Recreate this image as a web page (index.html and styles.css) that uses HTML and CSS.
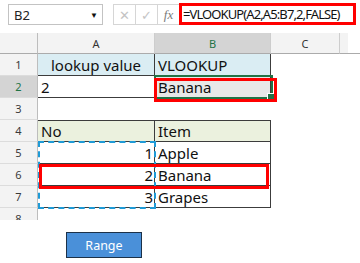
FILE: index.html
```html
<!DOCTYPE html>
<html lang="en">
<head>
    <meta charset="UTF-8" />
    <title>VLOOKUP</title>
    <link rel="stylesheet" href="styles.css">
</head>
<body>
    <div class="toolbar">
        <div class="name-box">
            <span>B2</span>
            <span class="drop">&#9660;</span>
        </div>
        <div class="fx-buttons">
            <span class="fx-btn">&#10005;</span>
            <span class="fx-btn">&#10003;</span>
            <span class="fx-btn fx">fx</span>
        </div>
        <div class="formula">=VLOOKUP(A2,A5:B7,2,FALSE)</div>
    </div>

    <div class="sheet">
        <div class="grid">
            <div class="hd corner"></div>
            <div class="hd col">A</div>
            <div class="hd col sel">B</div>
            <div class="hd col">C</div>
            <div class="hd rest"></div>

            <div class="rh">1</div>
            <div class="cell blue center">lookup value</div>
            <div class="cell blue">VLOOKUP</div>
            <div class="blank"></div><div class="blank"></div>

            <div class="rh sel">2</div>
            <div class="cell">2</div>
            <div class="cell active">Banana</div>
            <div class="blank"></div><div class="blank"></div>

            <div class="rh">3</div>
            <div class="blank"></div><div class="blank"></div><div class="blank"></div><div class="blank"></div>

            <div class="rh">4</div>
            <div class="cell green top">No</div>
            <div class="cell green top">Item</div>
            <div class="blank"></div><div class="blank"></div>

            <div class="rh">5</div>
            <div class="cell right">1</div>
            <div class="cell">Apple</div>
            <div class="blank"></div><div class="blank"></div>

            <div class="rh">6</div>
            <div class="cell right">2</div>
            <div class="cell">Banana</div>
            <div class="blank"></div><div class="blank"></div>

            <div class="rh">7</div>
            <div class="cell right">3</div>
            <div class="cell">Grapes</div>
            <div class="blank"></div><div class="blank"></div>

            <div class="rh">8</div>
            <div class="blank"></div><div class="blank"></div><div class="blank"></div><div class="blank"></div>
        </div>

        <!-- overlays -->
        <div class="selection"><span class="handle"></span></div>
        <div class="marquee"></div>
        <div class="mark mark-b2"></div>
        <div class="mark mark-row6"></div>
    </div>

    <div class="actions">
        <button class="range-btn">Range</button>
    </div>
</body>
</html>
```

FILE: styles.css
```css
body {
    margin: 0;
    background: #fff;
    font-family: "Noto Sans", "Liberation Sans", sans-serif;
    color: #222;
    width: 360px;
    height: 263px;
    overflow: hidden;
}

/* formula bar */
.toolbar {
    display: flex;
    align-items: flex-start;
    padding: 3px 0 0 8px;
    height: 30px;
    box-sizing: border-box;
}
.name-box {
    width: 95px;
    height: 21px;
    margin-top: 1px;
    box-sizing: border-box;
    border: 1px solid #c3c3c3;
    display: flex;
    align-items: center;
    justify-content: space-between;
    padding: 0 4px 0 5px;
    font-size: 13px;
    color: #222;
}
.drop {
    font-size: 8px;
    color: #111;
}
.fx-buttons {
    display: flex;
    margin-left: 10px;
    margin-top: 1px;
    height: 21px;
    border: 1px solid #d6d6d6;
    box-sizing: border-box;
}
.fx-btn {
    width: 21px;
    display: flex;
    align-items: center;
    justify-content: center;
    border-right: 1px solid #d6d6d6;
    color: #c4c4c4;
    font-size: 13px;
}
.fx-btn.fx {
    border-right: none;
    font-family: "Liberation Serif", serif;
    font-style: italic;
    color: #7a7a7a;
    font-size: 13px;
}
.formula {
    margin-left: -1px;
    width: 177px;
    height: 22px;
    box-sizing: border-box;
    border: 3px solid #f00;
    font-size: 13px;
    letter-spacing: -0.9px;
    line-height: 16px;
    padding-left: 1px;
    color: #111;
    white-space: nowrap;
}

/* sheet */
.sheet {
    position: relative;
    margin-top: 3px;
    height: 187px;
    overflow: hidden;
}
.grid {
    display: grid;
    grid-template-columns: 38px 117px 116px 69px 1fr;
    grid-template-rows: 21px;
    grid-auto-rows: 22px;
}
.hd {
    background: #f3f3f3;
    border-bottom: 1px solid #ababab;
    border-right: 1px solid #cdcdcd;
    box-sizing: border-box;
    font-size: 11px;
    color: #333;
    display: flex;
    align-items: center;
    justify-content: center;
}
.hd.corner {
    border-right: 1px solid #bdbdbd;
}
.hd.sel {
    background: #d4d4d4;
    color: #217346;
}
.hd.rest {
    border-right: none;
    background: linear-gradient(to right, #f3f3f3 8px, #fff 8px);
}
.rh {
    background: #f3f3f3;
    border-right: 1px solid #bdbdbd;
    border-bottom: 1px solid #dcdcdc;
    box-sizing: border-box;
    font-size: 11px;
    color: #3a3a3a;
    display: flex;
    align-items: center;
    justify-content: center;
}
.rh.sel {
    background: #d4d4d4;
    color: #217346;
}
.blank {
    background: #fff;
}
.cell {
    box-sizing: border-box;
    border-right: 1px solid #3c3c3c;
    border-bottom: 1px solid #3c3c3c;
    font-size: 15px;
    line-height: 20px;
    padding: 1px 3px 0;
    white-space: nowrap;
    color: #111;
}
.cell.top {
    border-top: 1px solid #3c3c3c;
    line-height: 19px;
}
.cell.center {
    text-align: center;
}
.cell.right {
    text-align: right;
    padding-right: 1px;
}
.cell.blue {
    background: #daedf3;
}
.cell.green {
    background: #ebf1de;
}
.cell.active {
    background: #e8e8e8;
}

/* overlays */
.selection {
    position: absolute;
    left: 154px;
    top: 42px;
    width: 119px;
    height: 24px;
    box-sizing: border-box;
    border: 2px solid #217346;
}
.handle {
    position: absolute;
    right: -4px;
    bottom: -4px;
    width: 6px;
    height: 6px;
    background: #217346;
    border: 1px solid #fff;
}
.marquee {
    position: absolute;
    left: 38px;
    top: 108px;
    width: 118px;
    height: 68px;
    box-sizing: border-box;
    border: 2px dashed #1f9bd7;
}
.mark {
    position: absolute;
    box-sizing: border-box;
    border: 3px solid #f00;
}
.mark-b2 {
    left: 154px;
    top: 45px;
    width: 123px;
    height: 24px;
}
.mark-row6 {
    left: 39px;
    top: 131px;
    width: 230px;
    height: 25px;
}

/* bottom button */
.actions {
    padding: 12px 0 0 66px;
}
.range-btn {
    width: 76px;
    height: 26px;
    background: #4a90d9;
    border: 1px solid #1c3148;
    color: #fff;
    font-family: "Noto Sans", "Liberation Sans", sans-serif;
    font-size: 12.5px;
    padding: 0;
    cursor: pointer;
}
```
